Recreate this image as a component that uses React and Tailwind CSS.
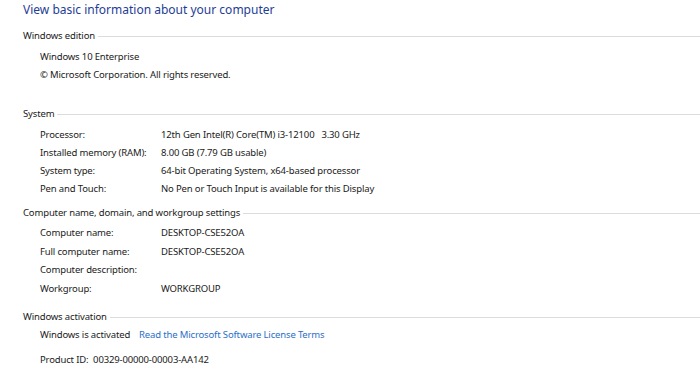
export default function App() {
  const sections = [
    {
      title: "Windows edition",
      gap: "mt-0",
      rowGap: "mt-[3px]",
      rowH: "h-[18px]",
      rows: [
        { label: "Windows 10 Enterprise" },
        { label: "© Microsoft Corporation. All rights reserved." },
      ],
    },
    {
      title: "System",
      gap: "mt-[21px]",
      rowGap: "mt-[3px]",
      rowH: "h-[18px]",
      rows: [
        { label: "Processor:", value: "12th Gen Intel(R) Core(TM) i3-12100   3.30 GHz" },
        { label: "Installed memory (RAM):", value: "8.00 GB (7.79 GB usable)" },
        { label: "System type:", value: "64-bit Operating System, x64-based processor" },
        { label: "Pen and Touch:", value: "No Pen or Touch Input is available for this Display" },
      ],
    },
    {
      title: "Computer name, domain, and workgroup settings",
      gap: "mt-[6px]",
      rowGap: "mt-[2px]",
      rowH: "h-[18.5px]",
      rows: [
        { label: "Computer name:", value: "DESKTOP-CSE52OA" },
        { label: "Full computer name:", value: "DESKTOP-CSE52OA" },
        { label: "Computer description:", value: "" },
        { label: "Workgroup:", value: "WORKGROUP" },
      ],
    },
  ];

  return (
    <div
      className="w-[700px] h-[388px] bg-white overflow-hidden text-[9.5px] tracking-[-0.15px] text-[#1a1a1a] pl-[23px]"
      style={{ fontFamily: '"Noto Sans", "Open Sans", sans-serif' }}
    >
      <h1 className="h-[27px] pt-[1px] text-[12px] tracking-normal leading-[18px] text-[#1e3d96]">
        View basic information about your computer
      </h1>

      {sections.map((s) => (
        <div key={s.title} className={s.gap}>
          <div className="h-[18px] flex items-center gap-[3px]">
            <span className="whitespace-nowrap">{s.title}</span>
            <div className="flex-1 h-px bg-[#dcdcdc]"></div>
          </div>
          <div className={`${s.rowGap} pl-[17px]`}>
            {s.rows.map((r) => (
              <div key={r.label} className={`${s.rowH} flex items-center whitespace-pre`}>
                {r.value !== undefined ? (
                  <>
                    <span className="w-[121px] shrink-0">{r.label}</span>
                    <span>{r.value}</span>
                  </>
                ) : (
                  <span>{r.label}</span>
                )}
              </div>
            ))}
          </div>
        </div>
      ))}

      {/* Activation */}
      <div className="mt-[10px]">
        <div className="h-[18px] flex items-center gap-[3px]">
          <span className="whitespace-nowrap">Windows activation</span>
          <div className="flex-1 h-px bg-[#dcdcdc]"></div>
        </div>
        <div className="pl-[17px]">
          <div className="h-[18px] flex items-center gap-[9px]">
            <span>Windows is activated</span>
            <a className="text-[#2a6fc9] cursor-pointer">Read the Microsoft Software License Terms</a>
          </div>
          <div className="mt-[7px] h-[18px] flex items-center whitespace-pre">
            Product ID:  00329-00000-00003-AA142
          </div>
        </div>
      </div>
    </div>
  );
}
